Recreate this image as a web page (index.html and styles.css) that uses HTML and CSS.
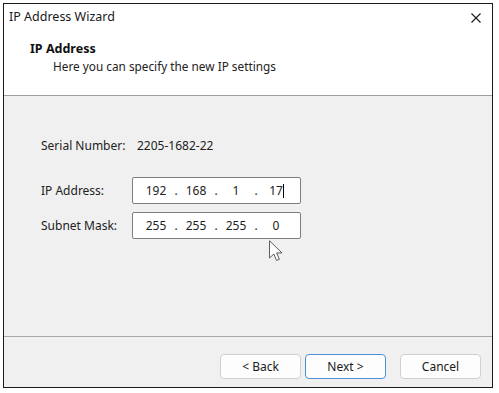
FILE: index.html
```html
<!DOCTYPE html>
<html lang="en">
<head>
    <meta charset="UTF-8">
    <title>IP Address Wizard</title>
    <link rel="stylesheet" href="styles.css">
</head>
<body>

    <div class="window">
        <div class="titlebar">
            <span class="title">IP Address Wizard</span>
            <svg class="close" width="10" height="10" viewBox="0 0 10 10">
                <path d="M0.5 0.5L9.5 9.5M9.5 0.5L0.5 9.5" stroke="#1a1a1a" stroke-width="1.1" fill="none"/>
            </svg>
        </div>

        <div class="header">
            <div class="header-title">IP Address</div>
            <div class="header-sub">Here you can specify the new IP settings</div>
        </div>

        <div class="content">
            <div class="row serial">
                <span class="label">Serial Number:</span>
                <span class="value">2205-1682-22</span>
            </div>
            <div class="row field">
                <span class="label">IP Address:</span>
                <div class="ipbox">
                    <span class="octet">192</span><span class="dot">.</span>
                    <span class="octet">168</span><span class="dot">.</span>
                    <span class="octet">1</span><span class="dot">.</span>
                    <span class="octet">17<span class="caret"></span></span>
                </div>
            </div>
            <div class="row field">
                <span class="label">Subnet Mask:</span>
                <div class="ipbox">
                    <span class="octet">255</span><span class="dot">.</span>
                    <span class="octet">255</span><span class="dot">.</span>
                    <span class="octet">255</span><span class="dot">.</span>
                    <span class="octet">0</span>
                </div>
            </div>

            <!-- mouse pointer -->
            <svg class="pointer" width="14" height="22" viewBox="0 0 13 20">
                <path d="M0.5 0.5L0.5 16.5L4.5 12.8L7 18.8L9.6 17.7L7.1 11.8L12 11.8Z" fill="#fff" stroke="#555" stroke-width="0.9" stroke-linejoin="round"/>
            </svg>
        </div>

        <div class="footer">
            <button class="btn">&lt; Back</button>
            <button class="btn btn-default">Next &gt;</button>
            <button class="btn btn-cancel">Cancel</button>
        </div>
    </div>

</body>
</html>
```

FILE: styles.css
```css
* {
    margin: 0;
    padding: 0;
    box-sizing: border-box;
}

body {
    background: #ffffff;
    font-family: 'Noto Sans', 'Open Sans', sans-serif;
    font-size: 12px;
    color: #222;
}

.window {
    margin: 3px 0 0 3px;
    width: 490px;
    height: 385px;
    border: 1px solid #1a1a1a;
    background: #fff;
    display: flex;
    flex-direction: column;
}

.titlebar {
    height: 26px;
    display: flex;
    align-items: center;
    justify-content: space-between;
    padding: 0 11px 0 5px;
}

.title {
    font-size: 12.5px;
    line-height: 16px;
    color: #1a1a1a;
}

.close {
    margin-top: 1px;
}

.header {
    height: 66px;
    padding: 11px 0 0 26px;
    border-bottom: 1px solid #a0a0a0;
    line-height: 16px;
}

.header-title {
    font-weight: bold;
    font-size: 12.5px;
    color: #111;
}

.header-sub {
    margin: 1px 0 0 23px;
    font-size: 11.8px;
}

.content {
    position: relative;
    height: 241px;
    background: #f0f0f0;
    border-bottom: 1px solid #a8a8a8;
    padding: 42px 0 0 37px;
}

.row {
    display: flex;
    align-items: center;
    line-height: 16px;
}

.serial {
    margin-bottom: 23px;
}

.field {
    margin-bottom: 8px;
}

.label {
    width: 91px;
}

.value {
    padding-left: 5px;
}

.ipbox {
    width: 169px;
    height: 27px;
    background: #fff;
    border: 1px solid #7d7d7d;
    border-radius: 2px;
    display: flex;
    align-items: center;
    padding-left: 7px;
}

.octet {
    width: 32px;
    text-align: center;
}

.dot {
    width: 8px;
    text-align: center;
}

.caret {
    display: inline-block;
    width: 1px;
    height: 14px;
    margin-right: -1px;
    background: #000;
    vertical-align: -3px;
}

.pointer {
    position: absolute;
    left: 265px;
    top: 144px;
}

.footer {
    flex: 1;
    display: flex;
    justify-content: flex-end;
    padding: 17px 11px 0 0;
    background: #f0f0f0;
}

.btn {
    width: 81px;
    height: 25px;
    font-family: inherit;
    font-size: 12px;
    color: #1a1a1a;
    background: #fdfdfd;
    border: 1px solid #d0d0d0;
    border-radius: 4px;
}

.btn-default {
    margin-left: 4px;
    border-color: #4f8fd6;
}

.btn-cancel {
    margin-left: 14px;
}
```
